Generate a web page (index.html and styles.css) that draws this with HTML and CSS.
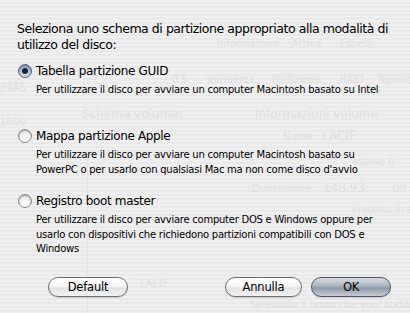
FILE: index.html
```html
<!DOCTYPE html>
<html lang="it">
<head>
<meta charset="utf-8">
<link rel="stylesheet" href="styles.css">
</head>
<body>
<div class="ghost" aria-hidden="true">
  <span class="g" style="left:217px;top:38px">Informazioni</span>
  <span class="g" style="left:292px;top:38px">Attiva</span>
  <span class="g" style="left:340px;top:38px">Espelli</span>
  <span class="g" style="left:0px;top:82px">24AS</span>
  <span class="g" style="left:162px;top:74px">2.0.5</span>
  <span class="g" style="left:207px;top:74px">Inizializza</span>
  <span class="g" style="left:272px;top:74px">Partiziona</span>
  <span class="g" style="left:340px;top:74px">RAID</span>
  <span class="g" style="left:378px;top:74px">Ripristina</span>
  <span class="g big" style="left:82px;top:107px">Schema volume:</span>
  <span class="g big" style="left:255px;top:107px">Informazioni volume</span>
  <span class="g" style="left:0px;top:116px">1600</span>
  <span class="g" style="left:283px;top:131px">Nome:</span>
  <span class="g big" style="left:322px;top:129px">LACIE</span>
  <span class="g" style="left:352px;top:156px">estese (j</span>
  <span class="g" style="left:252px;top:183px">Dimensione:</span>
  <span class="g big" style="left:323px;top:181px">148,93</span>
  <span class="g" style="left:392px;top:183px">GB</span>
  <span class="g" style="left:352px;top:204px">Protetto in scrittura</span>
  <span class="g" style="left:140px;top:278px">LACIE</span>
  <span class="g" style="left:250px;top:299px">Seleziona il disco che vuoi suddividere</span>
  <span class="vline"></span>
</div>

<div class="sheet">
  <p class="prompt">Seleziona uno schema di partizione appropriato alla modalità di utilizzo del disco:</p>

  <div class="options">
    <div class="option">
      <div class="opt-head"><span class="radio on"></span><span class="opt-label">Tabella partizione GUID</span></div>
      <p class="desc">Per utilizzare il disco per avviare un computer Macintosh basato su Intel</p>
    </div>
    <div class="option">
      <div class="opt-head"><span class="radio"></span><span class="opt-label">Mappa partizione Apple</span></div>
      <p class="desc">Per utilizzare il disco per avviare un computer Macintosh basato su PowerPC o per usarlo con qualsiasi Mac ma non come disco d'avvio</p>
    </div>
    <div class="option">
      <div class="opt-head"><span class="radio"></span><span class="opt-label">Registro boot master</span></div>
      <p class="desc">Per utilizzare il disco per avviare computer DOS e Windows oppure per usarlo con dispositivi che richiedono partizioni compatibili con DOS e Windows</p>
    </div>
  </div>

  <div class="buttons">
    <button class="btn">Default</button>
    <span class="spacer"></span>
    <button class="btn narrow">Annulla</button>
    <button class="btn primary">OK</button>
  </div>
</div>
</body>
</html>
```
FILE: styles.css
```css
html, body {
  margin: 0;
  padding: 0;
}
body {
  width: 410px;
  height: 313px;
  overflow: hidden;
  position: relative;
  font-family: "DejaVu Sans", "Liberation Sans", sans-serif;
  color: #000;
  background-color: #ededed;
  background-image: repeating-linear-gradient(to bottom, #efefef 0px, #efefef 2px, #e9e9e9 2px, #e9e9e9 4px);
}
.ghost {
  position: absolute;
  inset: 0;
  overflow: hidden;
  pointer-events: none;
}
.g {
  position: absolute;
  font-size: 10px;
  color: #e0e0e0;
  white-space: nowrap;
}
.g.big {
  font-size: 12px;
}
.vline {
  position: absolute;
  left: 87px;
  top: 150px;
  width: 1px;
  height: 163px;
  background: #e3e3e3;
}
.sheet {
  position: relative;
  padding: 21px 10px 0 17px;
}
.prompt {
  margin: 0;
  width: 380px;
  font-size: 12.5px;
  line-height: 16px;
  letter-spacing: -0.45px;
}
.options {
  display: flex;
  flex-direction: column;
  margin-top: 9px;
}
.option {
  display: flex;
  flex-direction: column;
}
.opt-head {
  display: flex;
  align-items: center;
  gap: 4px;
  height: 18px;
  margin-left: 1px;
}
.opt-label {
  font-size: 12px;
  letter-spacing: -0.35px;
}
.desc {
  margin: 3px 0 0 19px;
  width: 350px;
  min-height: 29px;
  font-size: 10px;
  line-height: 14.5px;
  letter-spacing: -0.25px;
}
.option + .option {
  margin-top: 15px;
}
.radio {
  width: 14px;
  height: 14px;
  border-radius: 50%;
  box-sizing: border-box;
  border: 1px solid #8a8a8a;
  background: radial-gradient(circle at 50% 75%, #ffffff 0%, #f4f4f4 40%, #d4d4d4 100%);
  box-shadow: inset 0 1px 1px rgba(0,0,0,0.25);
  position: relative;
  flex: none;
}
.radio.on {
  border-color: #5a6a80;
  background: radial-gradient(circle at 50% 70%, #e6eef8 0%, #a9bed6 50%, #7188a6 100%);
}
.radio.on::after {
  content: "";
  position: absolute;
  left: 3px;
  top: 3px;
  width: 6px;
  height: 6px;
  border-radius: 50%;
  background: #1c2430;
}
.buttons {
  display: flex;
  align-items: center;
  gap: 9px;
  margin-top: 20px;
  padding-left: 31px;
  padding-right: 9px;
}
.spacer {
  flex: 1;
}
.btn {
  width: 80px;
  height: 20px;
  border-radius: 10px;
  border: 1px solid #6f6f6f;
  font-family: inherit;
  font-size: 11.5px;
  letter-spacing: -0.2px;
  color: #000;
  padding: 0;
  background: linear-gradient(to bottom, #ffffff 0%, #f6f6f6 45%, #e2e2e2 55%, #f2f2f2 100%);
  box-shadow: 0 1px 1px rgba(0,0,0,0.15);
}
.btn.narrow {
  width: 77px;
}
.btn.primary {
  border-color: #4e5864;
  background: linear-gradient(to bottom, #d8dde3 0%, #aab3be 45%, #8e99a6 55%, #c4cbd4 100%);
}
```
